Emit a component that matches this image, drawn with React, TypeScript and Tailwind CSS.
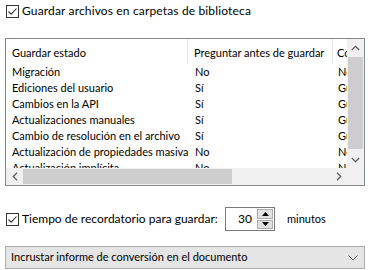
import React from "react";

const rows: [string, string, string][] = [
  ["Migración", "No", "No"],
  ["Ediciones del usuario", "Sí", "Guardar"],
  ["Cambios en la API", "Sí", "Guardar"],
  ["Actualizaciones manuales", "Sí", "Guardar"],
  ["Cambio de resolución en el archivo", "Sí", "Guardar"],
  ["Actualización de propiedades masiva", "No", "No"],
  ["Actualización implícita", "No", "No"],
];

function Check() {
  return (
    <div className="w-[13px] h-[13px] border border-[#333333] bg-white flex items-center justify-center shrink-0">
      <svg width="11" height="11" viewBox="0 0 11 11">
        <path d="M1.5 5.5 L4.2 8.2 L9.5 2.5" fill="none" stroke="#333333" strokeWidth="1.1" />
      </svg>
    </div>
  );
}

export default function App() {
  return (
    <div
      className="w-[370px] h-[270px] bg-white text-[12px] text-black relative overflow-hidden whitespace-nowrap"
      style={{ fontFamily: 'Lato, "Noto Sans", sans-serif' }}
    >
      <div className="flex items-center gap-[3px] pl-[6px] pt-[3px] h-[16px] box-content">
        <Check />
        <span className="leading-[16px] tracking-[0.15px]">Guardar archivos en carpetas de biblioteca</span>
      </div>

      <div className="mx-[5px] mt-[19px] border border-[#828790] h-[148px] grid grid-cols-[1fr_17px] grid-rows-[1fr_17px] text-[11px]">
        <div className="overflow-hidden relative">
          <div className="flex h-[25px] items-center">
            <div className="w-[182px] pl-[6px] pt-[3px] border-r border-[#e5e5e5] h-full flex items-center shrink-0">Guardar estado</div>
            <div className="w-[145px] pl-[6px] pt-[3px] border-r border-[#e5e5e5] h-full flex items-center shrink-0">Preguntar antes de guardar</div>
            <div className="pl-[4px] pt-[3px] h-full flex items-center">Conservar</div>
          </div>
          {rows.map((r, i) => (
            <div key={i} className="flex h-[16px] items-center">
              <div className="w-[182px] pl-[6px] shrink-0 overflow-hidden">{r[0]}</div>
              <div className="w-[145px] pl-[7px] shrink-0">{r[1]}</div>
              <div className="pl-[5px]">{r[2]}</div>
            </div>
          ))}
        </div>
        <div className="bg-[#f0f0f0] flex flex-col items-center">
          <div className="h-[17px] flex items-center justify-center">
            <svg width="9" height="6" viewBox="0 0 9 6"><path d="M0.8 5 L4.5 1.3 L8.2 5" fill="none" stroke="#606060" strokeWidth="1.3" /></svg>
          </div>
          <div className="flex-1 w-full px-[1px] py-[1px]">
            <div className="w-full h-[92px] bg-[#cdcdcd]" />
          </div>
          <div className="h-[17px] flex items-center justify-center">
            <svg width="9" height="6" viewBox="0 0 9 6"><path d="M0.8 1 L4.5 4.7 L8.2 1" fill="none" stroke="#606060" strokeWidth="1.3" /></svg>
          </div>
        </div>
        <div className="bg-[#f0f0f0] flex items-center">
          <div className="w-[17px] h-full flex items-center justify-center">
            <svg width="6" height="9" viewBox="0 0 6 9"><path d="M5 0.8 L1.3 4.5 L5 8.2" fill="none" stroke="#606060" strokeWidth="1.3" /></svg>
          </div>
          <div className="flex-1 h-full py-[1px]">
            <div className="w-[209px] h-full bg-[#cdcdcd]" />
          </div>
          <div className="w-[17px] h-full flex items-center justify-center">
            <svg width="6" height="9" viewBox="0 0 6 9"><path d="M1 0.8 L4.7 4.5 L1 8.2" fill="none" stroke="#606060" strokeWidth="1.3" /></svg>
          </div>
        </div>
        <div className="bg-[#f0f0f0]" />
      </div>

      <div className="flex items-center pl-[6px] mt-[21px] h-[24px]">
        <Check />
        <span className="ml-[3px] w-[203px]">Tiempo de recordatorio para guardar:</span>
        <div className="w-[50px] h-[24px] border border-[#7a7a7a] flex items-center bg-white">
          <div className="flex-1 text-right pr-[4px]">30</div>
          <div className="w-[18px] h-full flex flex-col gap-[1px] p-[1px]">
            <div className="flex-1 bg-[#e1e1e1] border border-[#adadad] flex items-center justify-center">
              <svg width="7" height="4" viewBox="0 0 7 4"><path d="M0 4 L3.5 0 L7 4 Z" fill="#000" /></svg>
            </div>
            <div className="flex-1 bg-[#e1e1e1] border border-[#adadad] flex items-center justify-center">
              <svg width="7" height="4" viewBox="0 0 7 4"><path d="M0 0 L3.5 4 L7 0 Z" fill="#000" /></svg>
            </div>
          </div>
        </div>
        <span className="ml-[12px] text-[11px]">minutos</span>
      </div>

      <div className="mx-[5px] mt-[15px] h-[23px] border border-[#adadad] bg-[#e5e5e5] flex items-center pl-[5px] pr-[6px] text-[11px]">
        <span className="flex-1">Incrustar informe de conversión en el documento</span>
        <svg width="10" height="6" viewBox="0 0 10 6"><path d="M0.5 0.5 L5 5 L9.5 0.5" fill="none" stroke="#606060" strokeWidth="1" /></svg>
      </div>
    </div>
  );
}
